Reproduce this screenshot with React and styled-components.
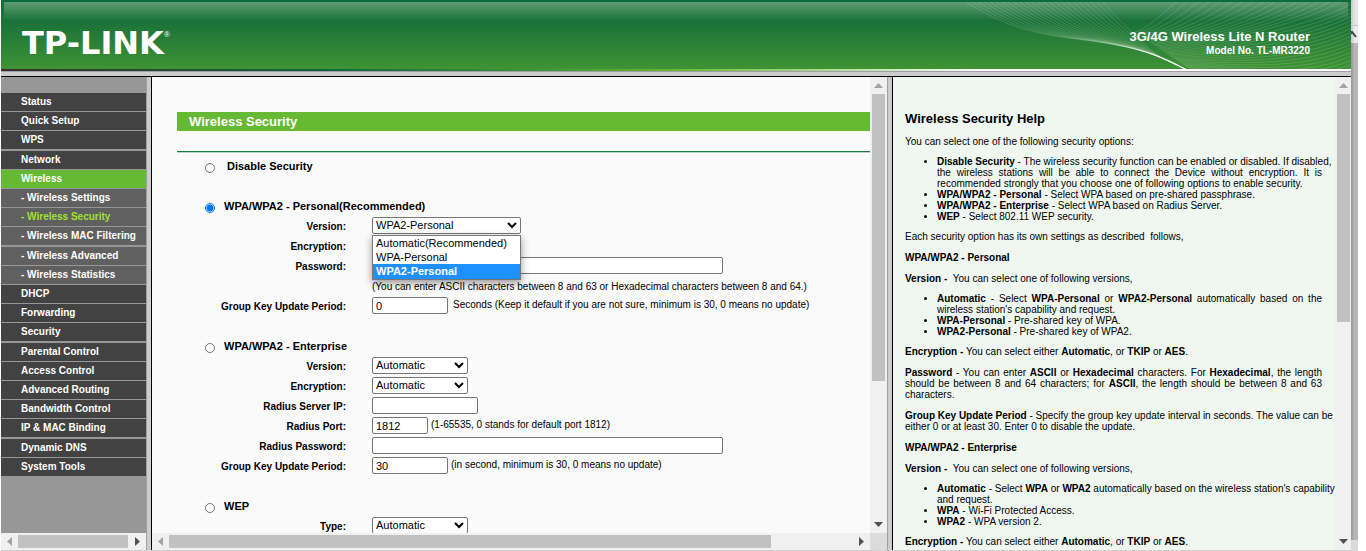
import React from 'react';
import styled, { createGlobalStyle, css } from 'styled-components';

const GlobalStyle = createGlobalStyle`
  *, *::before, *::after { box-sizing: border-box; }
  html, body { margin: 0; height: 100%; background: #fff; }
  body { font-family: Arial, "Liberation Sans", sans-serif; font-size: 10px; color: #000; overflow: hidden; }
`;

/* ---------- window ---------- */
const Window = styled.div`
  display: flex;
  height: 100vh;
  padding: 0 8px 0 1px;
`;
const Frameset = styled.div`
  flex: 1;
  min-width: 0;
  display: flex;
  flex-direction: column;
  border-bottom: 1px solid #d0d0d0;
`;
const OuterScroll = styled.div`
  width: 7px;
  display: flex;
  flex-direction: column;
  background: #d9d9d9;
`;
const OuterTop = styled.div`
  height: 26px;
  background: linear-gradient(90deg, #c9c9cb, #e6e6e9 4px);
  border-bottom: 1px solid #c4c4c4;
`;
const OuterArrow = styled.div`
  height: 17px;
  display: flex;
  align-items: center;
  overflow: hidden;
  background: linear-gradient(90deg, #c8c8c8, #ececec 4px);
`;
const OuterThumb = styled.div`
  flex: 1;
  margin-bottom: 11px;
  background: linear-gradient(90deg, #989898, #a6a6a6 2px, #b6b6b6 3px);
`;

/* ---------- banner ---------- */
const Banner = styled.header`
  position: relative;
  flex: none;
  display: flex;
  align-items: center;
  justify-content: space-between;
  height: 69px;
  padding: 14px 41px 0 21px;
  color: #fff;
  background: linear-gradient(#1a7238 0, #1a7238 20px, #419434 69px);
  border-top: 2px solid #0b6b3a;
`;
const Gloss = styled.div`
  position: absolute;
  inset: 0 3px auto;
  height: 19px;
  background: linear-gradient(rgba(255, 255, 255, .3), rgba(255, 255, 255, 0));
`;
const Waves = styled.svg`
  position: absolute;
  right: 0;
  top: 0;
`;
const Logo = styled.div`
  position: relative;
  display: flex;
  align-items: flex-start;
  font: bold 32px/32px "DejaVu Sans", Verdana, sans-serif;
`;
const Registered = styled.sup`
  font: 8px/10px Arial, "Liberation Sans", sans-serif;
  vertical-align: baseline;
  margin-top: 3px;
`;
const Product = styled.div`
  position: relative;
  text-align: right;
  font-weight: bold;
  font-size: 13px;
  line-height: 16px;
`;
const Model = styled.div`
  font-size: 10px;
  line-height: 12px;
`;
const Stripe = styled.div`
  flex: none;
  height: 2px;
  background: linear-gradient(90deg, #3a2e30, #0b6640 24%, #2f8a3a 36%, #62b932 50%, #fff 73%, #fff);
`;
const Bar = styled.div`
  flex: none;
  background: #ccc;
  ${p => p.$vertical
    ? css`width: 6px; border-left: 1px solid #a0a0a0; border-right: 1px solid #000;`
    : css`height: 6px; border-top: 1px solid #a0a0a0; border-bottom: 1px solid #000;`}
`;

/* ---------- frames ---------- */
const Frames = styled.div`
  flex: 1;
  min-height: 0;
  display: grid;
  grid-template-columns: 145px 6px minmax(0, 735fr) 6px minmax(0, 458fr);
`;
const Frame = styled.div`
  display: grid;
  grid-template-columns: minmax(0, 1fr) auto;
  grid-template-rows: minmax(0, 1fr) auto;
  min-height: 0;
  background: ${p => p.$bg};
`;
const Pane = styled.div`
  overflow: hidden;
`;
const ScrollTrack = styled.div`
  display: flex;
  background: #f0f0f0;
  ${p => p.$horizontal
    ? css`height: 17px; padding: 2px 0; min-width: 0;`
    : css`width: ${p.$narrow ? 16 : 17}px; padding: 0 ${p.$narrow ? 1 : 2}px 0 2px; flex-direction: column; min-height: 0;`}
`;
const ScrollArrow = styled.svg`
  flex: none;
  ${p => p.$horizontal ? css`width: 17px; height: 13px;` : css`width: 13px; height: 17px;`}
  fill: ${p => p.$off ? '#a3a3a3' : '#505050'};
`;
const ThumbArea = styled.div`
  flex: 1;
  display: flex;
  flex-direction: inherit;
`;
const Thumb = styled.div`
  flex: 0 0 ${p => p.$size}%;
  background: #c1c1c1;
`;
const Corner = styled.div`
  background: #dcdcdc;
`;

/* ---------- menu ---------- */
const Menu = styled.nav`
  overflow: hidden;
  padding-top: 16px;
`;
const MenuList = styled.ul`
  list-style: none;
  margin: 0;
  padding: 0;
`;
const MenuItem = styled.li`
  margin-bottom: 1px;
  &:nth-child(5n + 3) { margin-bottom: 2px; }
`;
const MenuLink = styled.a`
  display: block;
  padding-left: 20px;
  line-height: 18px;
  font-weight: bold;
  text-decoration: none;
  white-space: nowrap;
  color: ${p => p.$state === 'current' ? '#a0e030' : '#fff'};
  background: ${p => p.$state === 'open' ? '#66b932' : p.$sub ? '#606060' : '#424242'};
`;

/* ---------- settings form ---------- */
const Settings = styled.form`
  margin: 0;
  padding: 35px 0 0 25px;
`;
const Title = styled.h1`
  margin: 0 0 20px;
  padding-left: 12px;
  font-size: 13px;
  line-height: 19px;
  color: #fff;
  background: #66b932;
`;
const Rule = styled.hr`
  margin: 0 0 4px;
  border: 0;
  height: 2px;
  background: #b5d9c2;
  border-top: 1px solid #1a7a40;
`;
const Section = styled.fieldset`
  min-width: 0;
  margin: 0 0 20px;
  padding: 0;
  border: 0;
`;
const Choice = styled.label`
  display: flex;
  align-items: center;
  gap: ${p => p.$wide ? 12 : 9}px;
  height: 20px;
  padding: 0 0 2px 28px;
  font-size: 11px;
  font-weight: bold;
`;
const Radio = styled.input`
  appearance: none;
  flex: none;
  width: 10px;
  height: 10px;
  margin: 4px 0 0;
  border: 1px solid #767676;
  border-radius: 50%;
  background: #fff;
  &:checked {
    border-color: #0075ff;
    background: radial-gradient(circle, #0075ff 3px, #fff 4px);
  }
`;
const Field = styled.div`
  display: flex;
  align-items: flex-start;
  gap: ${p => p.$gap || 3}px;
  height: 20px;
  line-height: 12px;
  white-space: nowrap;
`;
const FieldLabel = styled.label`
  flex: none;
  width: 169px;
  margin-right: ${p => 26 - (p.$gap || 3)}px;
  padding-top: 4px;
  text-align: right;
  font-weight: bold;
`;
const controlBox = css`
  height: 17px;
  margin: 0;
  padding: 0 3px;
  border: 1px solid #767676;
  border-radius: 2px;
  background: #fff;
  color: #000;
  font: 11px/15px Arial, "Liberation Sans", sans-serif;
`;
const TextBox = styled.input`
  ${controlBox}
  width: ${p => p.$w}px;
`;
const SelectWrap = styled.div`
  position: relative;
  width: ${p => p.$w}px;
  height: 17px;
`;
const Select = styled.select`
  ${controlBox}
  appearance: none;
  display: block;
  width: 100%;
`;
const Chevron = styled.svg`
  position: absolute;
  right: 4px;
  top: 5px;
  pointer-events: none;
`;
const Options = styled.ul`
  position: absolute;
  z-index: 1;
  top: 18px;
  left: 0;
  right: 0;
  margin: 0;
  padding: 0 0 1px;
  list-style: none;
  border: 1px solid #767676;
  background: #fff;
  box-shadow: 0 3px 8px rgba(0, 0, 0, .4);
  font-size: 11px;
  line-height: 14px;
`;
const Option = styled.li`
  padding-left: 3px;
  ${p => p.$on && css`background: #1e90ff; color: #fff; font-weight: bold; padding-bottom: 1px; margin-bottom: -1px;`}
`;
const Note = styled.span`
  padding-top: 2px;
`;
const NoteRow = styled.div`
  height: 20px;
  padding-left: 195px;
  line-height: 20px;
  white-space: nowrap;
`;

/* ---------- help ---------- */
const Help = styled.article`
  padding: 34px 13px 0 12px;
  line-height: 11px;
  text-align: justify;
  p { margin: 9px 0; }
  p + p { margin-top: 10px; }
  ul { margin: 9px 0; padding-left: 32px; }
`;
const HelpTitle = styled.h2`
  margin: 0 0 10px;
  font-size: 13px;
  line-height: 15px;
`;
/* an opening line that stays in one piece */
const Line = styled.span`
  display: block;
  white-space: nowrap;
  text-align-last: justify;
`;

const ARROWS = {
  up: 'M2 11 6.5 6 11 11z',
  down: 'M2 6 6.5 11 11 6z',
  left: 'M11 2 6 6.5 11 11z',
  right: 'M6 2 11 6.5 6 11z',
};

function Scrollbar({ horizontal, size, narrow }) {
  const box = horizontal ? '0 0 17 13' : '0 0 13 17';
  return (
    <ScrollTrack $horizontal={horizontal} $narrow={narrow} aria-hidden="true">
      <ScrollArrow $horizontal={horizontal} $off viewBox={box}><path d={horizontal ? ARROWS.left : ARROWS.up} /></ScrollArrow>
      <ThumbArea><Thumb $size={size} /></ThumbArea>
      <ScrollArrow $horizontal={horizontal} viewBox={box}><path d={horizontal ? ARROWS.right : ARROWS.down} /></ScrollArrow>
    </ScrollTrack>
  );
}

function WaveLines() {
  const falling = Array.from({ length: 24 }, (_, i) => {
    const t = i / 23;
    return `M${12 + 138 * t} -2 C${50 + 116 * t} ${22 - 6 * t} ${75 + 100 * t} ${31 - 6 * t} ${125 + 65 * t} ${37 + 2 * t} S${205 + 5 * t} ${50 + 6 * t} 236 68`;
  });
  const sweeping = Array.from({ length: 34 }, (_, i) => {
    const t = i / 33;
    const endX = Math.min(405, 228 + i * 11);
    const endY = Math.max(-2, (i - 16) * 4);
    return `M${184 + 56 * t} ${30 + 38 * t} C${196 + 100 * t} ${26 + 42 * t} ${endX - 34 - 30 * t} ${endY + 28} ${endX} ${endY}`;
  });
  return (
    <Waves width="400" height="67" viewBox="0 0 400 67" fill="none" stroke="#fff" aria-hidden="true">
      {falling.map(d => <path key={d} d={d} opacity=".14" />)}
      {sweeping.map(d => <path key={d} d={d} opacity=".14" />)}
    </Waves>
  );
}

const MENU = [
  ['Status'], ['Quick Setup'], ['WPS'], ['Network'], ['Wireless', 'open'],
  ['- Wireless Settings'], ['- Wireless Security', 'current'], ['- Wireless MAC Filtering'],
  ['- Wireless Advanced'], ['- Wireless Statistics'], ['DHCP'], ['Forwarding'], ['Security'],
  ['Parental Control'], ['Access Control'], ['Advanced Routing'], ['Bandwidth Control'],
  ['IP & MAC Binding'], ['Dynamic DNS'], ['System Tools'],
];

function SelectField({ id, label, value, width = 96, options }) {
  return (
    <Field>
      <FieldLabel htmlFor={id}>{label}</FieldLabel>
      <SelectWrap $w={width}>
        <Select id={id} defaultValue={value}><option>{value}</option></Select>
        <Chevron width="10" height="7" viewBox="0 0 10 7" fill="none" stroke="#000" strokeWidth="2" aria-hidden="true">
          <path d="M1 1 5 5 9 1" />
        </Chevron>
        {options && (
          <Options role="listbox" aria-label={label}>
            {options.map(o => <Option key={o} role="option" aria-selected={o === value} $on={o === value}>{o}</Option>)}
          </Options>
        )}
      </SelectWrap>
    </Field>
  );
}

function TextField({ id, label, width, value = '', note, gap }) {
  return (
    <Field $gap={gap}>
      <FieldLabel htmlFor={id} $gap={gap}>{label}</FieldLabel>
      <TextBox id={id} $w={width} defaultValue={value} />
      {note && <Note>{note}</Note>}
    </Field>
  );
}

export default function App() {
  return (
    <Window>
      <GlobalStyle />
      <Frameset>
        <Banner>
          <WaveLines />
          <Gloss />
          <Logo>TP-LINK<Registered>®</Registered></Logo>
          <Product>3G/4G Wireless Lite N Router<Model>Model No. TL-MR3220</Model></Product>
        </Banner>
        <Stripe />
        <Bar />
        <Frames>
          <Frame $bg="#979797">
            <Menu>
              <MenuList>
                {MENU.map(([text, state]) => (
                  <MenuItem key={text}>
                    <MenuLink href="#" $state={state} $sub={text.startsWith('-')}>{text}</MenuLink>
                  </MenuItem>
                ))}
              </MenuList>
            </Menu>
            <span />
            <Scrollbar horizontal size={99} />
          </Frame>
          <Bar $vertical />
          <Frame $bg="#fafafa">
            <Pane as="main">
              <Settings>
                <Title>Wireless Security</Title>
                <Rule />
                <Section>
                  <Choice $wide><Radio type="radio" name="mode" />Disable Security</Choice>
                </Section>
                <Section>
                  <Choice><Radio type="radio" name="mode" defaultChecked />WPA/WPA2 - Personal(Recommended)</Choice>
                  <SelectField id="psk-version" label="Version:" value="WPA2-Personal" width={149}
                    options={['Automatic(Recommended)', 'WPA-Personal', 'WPA2-Personal']} />
                  <SelectField id="psk-encryption" label="Encryption:" value="Automatic" />
                  <TextField id="psk-password" label="Password:" width={351} />
                  <NoteRow>(You can enter ASCII characters between 8 and 63 or Hexadecimal characters between 8 and 64.)</NoteRow>
                  <TextField id="psk-period" label="Group Key Update Period:" width={76} value="0" gap={5}
                    note="Seconds (Keep it default if you are not sure, minimum is 30, 0 means no update)" />
                </Section>
                <Section>
                  <Choice><Radio type="radio" name="mode" />WPA/WPA2 - Enterprise</Choice>
                  <SelectField id="ent-version" label="Version:" value="Automatic" />
                  <SelectField id="ent-encryption" label="Encryption:" value="Automatic" />
                  <TextField id="radius-ip" label="Radius Server IP:" width={106} />
                  <TextField id="radius-port" label="Radius Port:" width={56} value="1812" note="(1-65535, 0 stands for default port 1812)" />
                  <TextField id="radius-password" label="Radius Password:" width={351} />
                  <TextField id="ent-period" label="Group Key Update Period:" width={76} value="30"
                    note="(in second, minimum is 30, 0 means no update)" />
                </Section>
                <Section>
                  <Choice><Radio type="radio" name="mode" />WEP</Choice>
                  <SelectField id="wep-type" label="Type:" value="Automatic" />
                </Section>
              </Settings>
            </Pane>
            <Scrollbar size={68} />
            <Scrollbar horizontal size={88} />
            <Corner />
          </Frame>
          <Bar $vertical />
          <Frame $bg="#eff7f0">
            <Pane as="aside">
              <Help>
                <HelpTitle>Wireless Security Help</HelpTitle>
                <p>You can select one of the following security options:</p>
                <ul>
                  <li><Line><b>Disable Security</b> - The wireless security function can be enabled or disabled. If disabled,</Line> the wireless stations will be able to connect the Device without encryption. It is recommended strongly that you choose one of following options to enable security.</li>
                  <li><b>WPA/WPA2 - Personal</b> - Select WPA based on pre-shared passphrase.</li>
                  <li><b>WPA/WPA2 - Enterprise</b> - Select WPA based on Radius Server.</li>
                  <li><b>WEP</b> - Select 802.11 WEP security.</li>
                </ul>
                <p>Each security option has its own settings as described &nbsp;follows,</p>
                <p><b>WPA/WPA2 - Personal</b></p>
                <p><b>Version -</b> &nbsp;You can select one of following versions,</p>
                <ul>
                  <li><b>Automatic</b> - Select <b>WPA-Personal</b> or <b>WPA2-Personal</b> automatically based on the wireless station's capability and request.</li>
                  <li><b>WPA-Personal</b> - Pre-shared key of WPA.</li>
                  <li><b>WPA2-Personal</b> - Pre-shared key of WPA2.</li>
                </ul>
                <p><b>Encryption -</b> You can select either <b>Automatic</b>, or <b>TKIP</b> or <b>AES</b>.</p>
                <p><b>Password</b> - You can enter <b>ASCII</b> or <b>Hexadecimal</b> characters. For <b>Hexadecimal</b>, the length should be between 8 and 64 characters; for <b>ASCII</b>, the length should be between 8 and 63 characters.</p>
                <p><Line><b>Group Key Update Period</b> - Specify the group key update interval in seconds. The value can be</Line> either 0 or at least 30. Enter 0 to disable the update.</p>
                <p><b>WPA/WPA2 - Enterprise</b></p>
                <p><b>Version -</b> &nbsp;You can select one of following versions,</p>
                <ul>
                  <li><Line><b>Automatic</b> - Select <b>WPA</b> or <b>WPA2</b> automatically based on the wireless station's capability</Line> and request.</li>
                  <li><b>WPA</b> - Wi-Fi Protected Access.</li>
                  <li><b>WPA2</b> - WPA version 2.</li>
                </ul>
                <p><b>Encryption -</b> You can select either <b>Automatic</b>, or <b>TKIP</b> or <b>AES</b>.</p>
              </Help>
            </Pane>
            <Scrollbar size={52} narrow />
          </Frame>
        </Frames>
      </Frameset>
      <OuterScroll aria-hidden="true">
        <OuterTop />
        <OuterArrow>
          <svg width="7" height="7" viewBox="0 0 7 7" fill="none" stroke="#404040" strokeWidth="2"><path d="M-2 4 1 1 5 6" /></svg>
        </OuterArrow>
        <OuterThumb />
      </OuterScroll>
    </Window>
  );
}
